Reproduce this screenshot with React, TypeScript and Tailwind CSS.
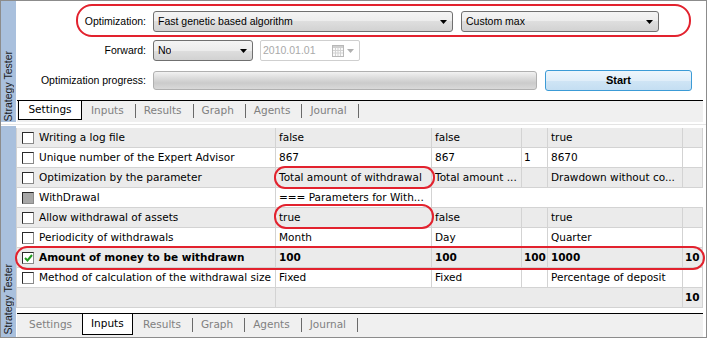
import React from 'react';

const TAHOMA = "font-['DejaVu_Sans',sans-serif]";
const DIALOG = "font-['Liberation_Sans',Arial,sans-serif]";

type Check = 'off' | 'on' | 'gray' | 'none';

type Row = {
  label: string;
  check: Check;
  cells: string[];
  merged?: 'params' | 'tail';
  bold?: boolean;
};

const rows: Row[] = [
  { label: 'Writing a log file', check: 'off', cells: ['false', 'false', '', 'true', ''] },
  { label: 'Unique number of the Expert Advisor', check: 'off', cells: ['867', '867', '1', '8670', ''] },
  {
    label: 'Optimization by the parameter',
    check: 'off',
    cells: ['Total amount of withdrawal', 'Total amount ...', '', 'Drawdown without co...', ''],
  },
  { label: 'WithDrawal', check: 'gray', cells: ['=== Parameters for With...'], merged: 'params' },
  { label: 'Allow withdrawal of assets', check: 'off', cells: ['true', 'false', '', 'true', ''] },
  { label: 'Periodicity of withdrawals', check: 'off', cells: ['Month', 'Day', '', 'Quarter', ''] },
  {
    label: 'Amount of money to be withdrawn',
    check: 'on',
    cells: ['100', '100', '100', '1000', '10'],
    bold: true,
  },
  {
    label: 'Method of calculation of the withdrawal size',
    check: 'off',
    cells: ['Fixed', 'Fixed', '', 'Percentage of deposit', ''],
  },
  { label: '', check: 'none', cells: ['10'], merged: 'tail' },
];

const colWidths = ['w-[156px]', 'w-[90px]', 'w-[26px]', 'w-[135px]', 'w-[20px]'];
const colPads = ['pl-[3px]', 'pl-[3px]', 'pl-[2px]', 'pl-[3px]', 'pl-[2px]'];

const Arrow = ({ color = '#000' }: { color?: string }) => (
  <svg width="7" height="4" viewBox="0 0 7 4">
    <path d="M0 0H7L3.5 4Z" fill={color} />
  </svg>
);

const SideBar = ({ pad }: { pad: string }) => (
  <div className={`w-[15px] h-full bg-[#a9c0dd] flex flex-col justify-end items-center ${pad}`}>
    <span
      className={`${DIALOG} text-[10.5px] leading-[13px] text-[#1a1a1a] whitespace-nowrap [writing-mode:vertical-rl] rotate-180`}
    >
      Strategy Tester
    </span>
  </div>
);

const ComboBox = ({ text, className }: { text: string; className: string }) => (
  <div
    className={`h-[21px] rounded-[3px] border border-[#707070] bg-[linear-gradient(#f4f4f4,#ececec_50%,#dedede_50%,#d2d2d2)] flex items-center justify-between pl-[4px] pr-[5px] ${className}`}
  >
    <span className="truncate">{text}</span>
    <Arrow />
  </div>
);

const CalendarIcon = () => (
  <svg width="12" height="12" viewBox="0 0 12 12">
    <rect x="0.5" y="0.5" width="11" height="11" fill="#fafafa" stroke="#b8b8b8" />
    <rect x="1" y="1" width="10" height="2" fill="#cfcfcf" />
    <path d="M1 5.5H11M1 8H11M3.5 3V11M6 3V11M8.5 3V11" stroke="#d2d2d2" strokeWidth="1" />
  </svg>
);

const CheckBox = ({ state }: { state: Check }) => {
  if (state === 'none') return null;
  return (
    <span
      className={`shrink-0 w-[12px] h-[12px] border border-t-[#2a2a2a] border-l-[#2a2a2a] border-r-[#8a8a8a] border-b-[#8a8a8a] flex items-center justify-center ${
        state === 'gray' ? 'bg-[#a7a7a7]' : 'bg-white'
      }`}
    >
      {state === 'on' && (
        <svg width="9" height="8" viewBox="0 0 9 8">
          <path d="M1 4L3.5 6.5L8 1" fill="none" stroke="#1f9a1f" strokeWidth="2" />
        </svg>
      )}
    </span>
  );
};

const TableRow = ({ row, index }: { row: Row; index: number }) => {
  const bg = index % 2 === 0 ? 'bg-[#ebebeb]' : 'bg-white';
  const weight = row.bold ? 'font-bold' : '';
  const line = 'border-r border-b border-[#d3d3d3]';

  return (
    <div className={`flex h-[20px] ${bg} ${weight}`}>
      <div className={`w-[259px] ${line} flex items-center gap-[5px] pl-[5px] whitespace-nowrap overflow-hidden`}>
        <CheckBox state={row.check} />
        <span>{row.label}</span>
      </div>

      {row.merged === 'params' && (
        <>
          <div className={`w-[156px] ${line} flex items-center pl-[3px] whitespace-nowrap overflow-hidden`}>
            {row.cells[0]}
          </div>
          <div className="w-[271px] border-b border-[#d3d3d3]" />
        </>
      )}

      {row.merged === 'tail' && (
        <>
          <div className={`w-[407px] ${line}`} />
          <div className={`w-[20px] ${line} flex items-center pl-[2px] font-bold`}>{row.cells[0]}</div>
        </>
      )}

      {!row.merged &&
        row.cells.map((c, i) => (
          <div
            key={i}
            className={`${colWidths[i]} ${line} ${colPads[i]} flex items-center whitespace-nowrap overflow-hidden`}
          >
            {c}
          </div>
        ))}
    </div>
  );
};

const Separator = () => <span className="w-px h-[14px] bg-[#6a6a6a]" />;

const Tab = ({ label, first }: { label: string; first?: boolean }) => (
  <>
    <span className={`${first ? 'pl-[9px]' : 'pl-[8px]'} pr-[11px] text-[#808080]`}>{label}</span>
    <Separator />
  </>
);

const TabStrip = ({ active, height }: { active: 'Settings' | 'Inputs'; height: string }) => (
  <div
    className={`${height} ml-[1px] mr-[3px] border-t border-black bg-[#f0f0f0] flex items-start ${TAHOMA} text-[10.5px]`}
  >
    {active === 'Settings' ? (
      <>
        <div className="ml-[1px] w-[64px] h-[19px] bg-white border-l border-r border-b border-black flex items-center justify-center text-black">
          Settings
        </div>
        <div className="h-[19px] flex items-center">
          <Tab label="Inputs" first />
          <Tab label="Results" />
          <Tab label="Graph" />
          <Tab label="Agents" />
          <Tab label="Journal" />
        </div>
      </>
    ) : (
      <>
        <div className="w-[65px] h-[21px] flex items-center pl-[12px] text-[#808080]">Settings</div>
        <div className="w-[51px] h-[21px] bg-white border-l border-r border-b border-black flex items-center pl-[8px] text-black">
          Inputs
        </div>
        <div className="h-[21px] flex items-center">
          <span className="pl-[10px] pr-[11px] text-[#808080]">Results</span>
          <Separator />
          <Tab label="Graph" />
          <Tab label="Agents" />
          <Tab label="Journal" />
        </div>
      </>
    )}
  </div>
);

const Label = ({ children }: { children: React.ReactNode }) => (
  <div className="w-[130px] text-right">{children}</div>
);

const SettingsPanel = () => (
  <div className="flex h-[121px]">
    <SideBar pad="pb-[1px]" />
    <div className="flex-1 flex flex-col">
      <div className={`h-[99px] pt-[10px] ${DIALOG} text-[10.5px] text-black`}>
        <div className="flex items-center h-[21px]">
          <Label>Optimization:</Label>
          <ComboBox text="Fast genetic based algorithm" className="ml-[7px] w-[300px]" />
          <ComboBox text="Custom max" className="ml-[8px] w-[198px]" />
        </div>

        <div className="flex items-center h-[21px] mt-[8px]">
          <Label>Forward:</Label>
          <ComboBox text="No" className="ml-[7px] w-[100px]" />
          <div className="ml-[7px] w-[100px] h-[21px] rounded-[2px] border border-[#cfcfcf] bg-white flex items-center pl-[2px] pr-[5px] text-[#a9a9a9]">
            <span className="flex-1">2010.01.01</span>
            <CalendarIcon />
            <span className="ml-[3px]">
              <Arrow color="#b0b0b0" />
            </span>
          </div>
        </div>

        <div className="flex items-center h-[21px] mt-[9px]">
          <Label>Optimization progress:</Label>
          <div className="ml-[7px] w-[384px] h-[19px] rounded-[3px] border border-[#b0b0b0] bg-[linear-gradient(#f2f2f2,#dcdcdc_35%,#cbcbcb_65%,#d9d9d9)]" />
          <button
            type="button"
            className="ml-[8px] w-[147px] h-[21px] rounded-[3px] border border-[#3c9bd6] bg-[linear-gradient(#eef6fc,#e0eef9_50%,#d0e5f5_50%,#c4def2)] font-bold text-[11px] text-black flex items-center justify-center"
          >
            Start
          </button>
        </div>
      </div>
      <TabStrip active="Settings" height="h-[22px]" />
    </div>
  </div>
);

const InputsPanel = () => (
  <div className="flex h-[211px]">
    <SideBar pad="pb-[3px]" />
    <div className={`flex-1 flex flex-col pt-[2px] ${TAHOMA} text-[10.5px] text-black`}>
      <div className="w-[687px] border-l border-[#d3d3d3]">
        {rows.map((row, i) => (
          <TableRow key={i} row={row} index={i} />
        ))}
      </div>
      <div className="h-[5px]" />
      <TabStrip active="Inputs" height="h-[24px]" />
    </div>
  </div>
);

const App = () => {
  return (
    <div className="relative w-[707px] h-[338px] overflow-hidden bg-white border border-[#8c8c8c]">
      <SettingsPanel />

      <div className="h-[4px] flex items-center">
        <div className="h-px w-full bg-[#e4e4e4]" />
      </div>

      <InputsPanel />

      {/* Red highlight marks drawn over the screenshot */}
      <div className="absolute left-[75px] top-[3px] w-[615px] h-[33px] rounded-[16px] border-2 border-[#e2222e] pointer-events-none" />
      <div className="absolute left-[273px] top-[165px] w-[161px] h-[23px] rounded-[11px] border-2 border-[#e2222e] pointer-events-none" />
      <div className="absolute left-[273px] top-[203px] w-[160px] h-[25px] rounded-[12px] border-2 border-[#e2222e] pointer-events-none" />
      <div className="absolute left-[14px] top-[245px] w-[690px] h-[24px] rounded-[12px] border-2 border-[#e2222e] pointer-events-none" />
    </div>
  );
};

export default App;
